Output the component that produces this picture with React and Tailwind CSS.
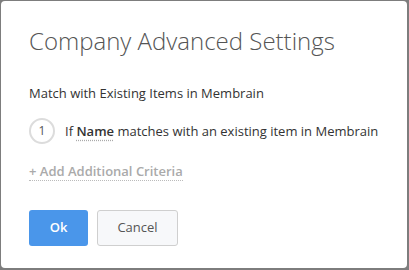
import React from 'react';

export default function App() {
    return (
        <div className="w-[409px] h-[270px] bg-[#7d7d7d] pt-px pl-px pr-[2px] pb-[2px] font-['Open_Sans',sans-serif]">
            <div className="h-full bg-white rounded-[4px] pl-[28px] pt-[24px]">
                <h1 className="text-[24px] leading-[32px] font-light text-[#555]">Company Advanced Settings</h1>

                <div className="mt-[26px] text-[13px] leading-[20px] text-[#333]">Match with Existing Items in Membrain</div>

                {/* Criteria list */}
                <div className="mt-[15px] flex items-center gap-[10px] text-[13px] leading-[20px] text-[#333]">
                    <div className="w-[26px] h-[26px] rounded-full border-2 border-[#dcdcdc] flex items-center justify-center text-[12px] text-[#555]">1</div>
                    <div>
                        If{' '}
                        <span className="font-semibold underline decoration-dotted decoration-[#aaa] underline-offset-[4px]">Name</span>{' '}
                        matches with an existing item in Membrain
                    </div>
                </div>

                <div className="mt-[14px]">
                    <span className="inline-block text-[13px] leading-[18px] font-semibold text-[#aaa] border-b border-dotted border-[#bbb]">+ Add Additional Criteria</span>
                </div>

                <div className="mt-[28px] flex gap-[9px]">
                    <button className="w-[59px] h-[36px] rounded-[3px] bg-[#4a96ea] text-white text-[13px] font-semibold">Ok</button>
                    <button className="w-[81px] h-[36px] rounded-[3px] bg-[#f7f8fa] border border-[#cfcfcf] text-[#555] text-[13px]">Cancel</button>
                </div>
            </div>
        </div>
    );
}
